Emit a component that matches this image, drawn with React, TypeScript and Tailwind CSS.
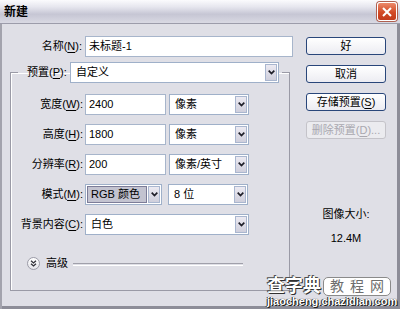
import React from 'react';

const font = "font-['Liberation_Sans','Noto_Sans_CJK_SC',sans-serif]";

function Label({ text, k, className = '' }: { text: string; k: string; className?: string }) {
    return (
        <span className={`whitespace-nowrap ${className}`}>
            {text}(<span className="underline underline-offset-[2px]">{k}</span>):
        </span>
    );
}

function ArrowBtn() {
    return (
        <div className="flex h-full w-[12px] shrink-0 items-center justify-center border border-[#a9b6cf] bg-[linear-gradient(to_bottom,#eceaf2,#cfcfdc)]">
            <svg width="7" height="5" viewBox="0 0 7 5">
                <path d="M0.7 0.7 L3.5 3.6 L6.3 0.7" stroke="#1e1e28" strokeWidth="1.7" fill="none" />
            </svg>
        </div>
    );
}

function Select({ value, width, highlight = false }: { value: string; width: string; highlight?: boolean }) {
    return (
        <div className={`flex h-[21px] ${width} items-stretch border border-[#9fb0c9] bg-white p-px`}>
            {highlight ? (
                <div className="flex min-w-0 flex-1 items-center pr-[1px]">
                    <div className="flex h-full w-full items-center whitespace-nowrap border border-[#7c7c98] bg-[#c3c3d0] px-[3px]">{value}</div>
                </div>
            ) : (
                <div className="flex flex-1 items-center whitespace-nowrap px-[4px]">{value}</div>
            )}
            <ArrowBtn />
        </div>
    );
}

function Input({ value, width }: { value: string; width: string }) {
    return (
        <div className={`flex h-[21px] ${width} items-center border border-[#a7b5cb] bg-white px-[3px]`}>{value}</div>
    );
}

function Button({ children, disabled = false }: { children: React.ReactNode; disabled?: boolean }) {
    return (
        <div
            className={`flex h-[18px] w-[80px] items-center justify-center whitespace-nowrap rounded-[3px] border ${
                disabled
                    ? 'border-[#c4c3c9] bg-[#ebebef] text-[#a9a8b0]'
                    : 'border-[#29467a] bg-[linear-gradient(to_bottom,#ffffff,#ececf2)] text-black'
            }`}
        >
            {children}
        </div>
    );
}

export default function App() {
    const rows = [
        { label: '宽度', k: 'W', value: '2400', unit: '像素' },
        { label: '高度', k: 'H', value: '1800', unit: '像素' },
        { label: '分辨率', k: 'R', value: '200', unit: '像素/英寸' },
    ];

    return (
        <div className={`relative h-[309px] w-[400px] overflow-hidden bg-[#dfdfe6] text-[11px] leading-none text-black ${font} shadow-[inset_2px_0_0_#a3a3ad,inset_-3px_0_0_#8d8d98,inset_0_-3px_0_#8d8d98]`}>
            {/* Title bar */}
            <div className="flex h-[24px] items-center justify-between border-b border-[#9c9caa] bg-[linear-gradient(to_bottom,#fbfbfd_0%,#e6e6ee_30%,#c6c6d4_62%,#d9d9e3_100%)] pl-[4px] pr-[3px]">
                <span className="text-[12px] font-bold">新建</span>
                <div className="flex h-[19px] w-[20px] items-center justify-center rounded-[3px] border border-white bg-[linear-gradient(to_bottom,#ec8a6c,#d24a26_55%,#c23a1c)] shadow-[0_0_0_1px_#b06050]">
                    <svg width="10" height="10" viewBox="0 0 10 10">
                        <path d="M1 1 L9 9 M9 1 L1 9" stroke="#fff" strokeWidth="2" />
                    </svg>
                </div>
            </div>

            <div className="flex">
                {/* Left column */}
                <div className="w-[293px]">
                    <div className="mt-[12px] flex h-[21px] items-center">
                        <div className="w-[85px] pr-[3px] text-right">
                            <Label text="名称" k="N" />
                        </div>
                        <Input value="未标题-1" width="w-[208px]" />
                    </div>

                    <fieldset className="ml-[10px] mt-[5px] w-[280px] border border-[#9a9aa6] px-0 pb-[20px] pt-0 shadow-[inset_1px_1px_0_#fff]">
                        <legend className="ml-[7px] px-0">
                            <div className="flex h-[21px] items-center pl-[9px] pr-[3px]">
                                <div className="w-[43px]">
                                    <Label text="预置" k="P" />
                                </div>
                                <Select value="自定义" width="w-[209px]" />
                            </div>
                        </legend>

                        <div className="mt-[11px] flex flex-col gap-[9px]">
                            {rows.map((r) => (
                                <div key={r.k} className="flex h-[21px] items-center">
                                    <div className="w-[74px] pr-[2px] text-right">
                                        <Label text={r.label} k={r.k} />
                                    </div>
                                    <Input value={r.value} width="w-[81px]" />
                                    <div className="ml-[3px]">
                                        <Select value={r.unit} width="w-[80px]" />
                                    </div>
                                </div>
                            ))}
                            <div className="flex h-[21px] items-center">
                                <div className="w-[74px] pr-[2px] text-right">
                                    <Label text="模式" k="M" />
                                </div>
                                <Select value="RGB 颜色" width="w-[77px]" highlight />
                                <div className="ml-[6px]">
                                    <Select value="8 位" width="w-[80px]" />
                                </div>
                            </div>
                            <div className="flex h-[21px] items-center">
                                <div className="w-[74px] pr-[2px] text-right">
                                    <Label text="背景内容" k="C" />
                                </div>
                                <Select value="白色" width="w-[164px]" />
                            </div>
                        </div>

                        {/* Advanced */}
                        <div className="ml-[16px] mt-[22px] flex h-[13px] items-center">
                            <div className="flex h-[13px] w-[13px] items-center justify-center rounded-full border border-[#9c9ca8] bg-[linear-gradient(to_bottom,#ffffff,#e4e4ea)]">
                                <svg width="7" height="7" viewBox="0 0 7 7">
                                    <path d="M1 0.8 L3.5 3 L6 0.8 M1 3.8 L3.5 6 L6 3.8" stroke="#303038" strokeWidth="1.3" fill="none" />
                                </svg>
                            </div>
                            <span className="ml-[6px]">高级</span>
                            <div className="ml-[5px] h-[2px] w-[170px] border-t border-[#a0a0aa] bg-transparent shadow-[0_1px_0_#fff]" />
                        </div>
                    </fieldset>
                </div>

                {/* Right column */}
                <div className="ml-[13px] flex w-[80px] flex-col">
                    <div className="mt-[13px] flex flex-col gap-[10px]">
                        <Button>好</Button>
                        <Button>取消</Button>
                        <Button>
                            存储预置(<span className="underline underline-offset-[2px]">S</span>)
                        </Button>
                        <Button disabled>
                            删除预置(<span className="underline underline-offset-[2px]">D</span>)...
                        </Button>
                    </div>
                    <div className="mt-[68px] flex flex-col items-center gap-[10px] leading-[14px]">
                        <span>图像大小:</span>
                        <span>12.4M</span>
                    </div>
                </div>
            </div>

            {/* Watermark */}
            <div className="absolute bottom-[2px] right-[9px] flex w-[124px] flex-col items-start">
                <div className="flex h-[19px] w-full items-center justify-between">
                    <span className="text-[18px] font-bold leading-[19px] text-white [text-shadow:0_0_1px_#222,1px_1px_0_#333,-1px_-1px_0_#555]">查字典</span>
                    <span className="flex w-[68px] justify-between rounded-[5px] border border-[#8a8a8a] bg-white px-[6px] text-[14px] leading-[17px] text-[#6e6e6e]">
                        <span>教</span>
                        <span>程</span>
                        <span>网</span>
                    </span>
                </div>
                <span className="text-[11px] font-bold leading-[11px] text-white [text-shadow:0_0_1px_#111,1px_1px_0_#222,-1px_0_0_#333]">jiaocheng.chazidian.com</span>
            </div>
        </div>
    );
}
